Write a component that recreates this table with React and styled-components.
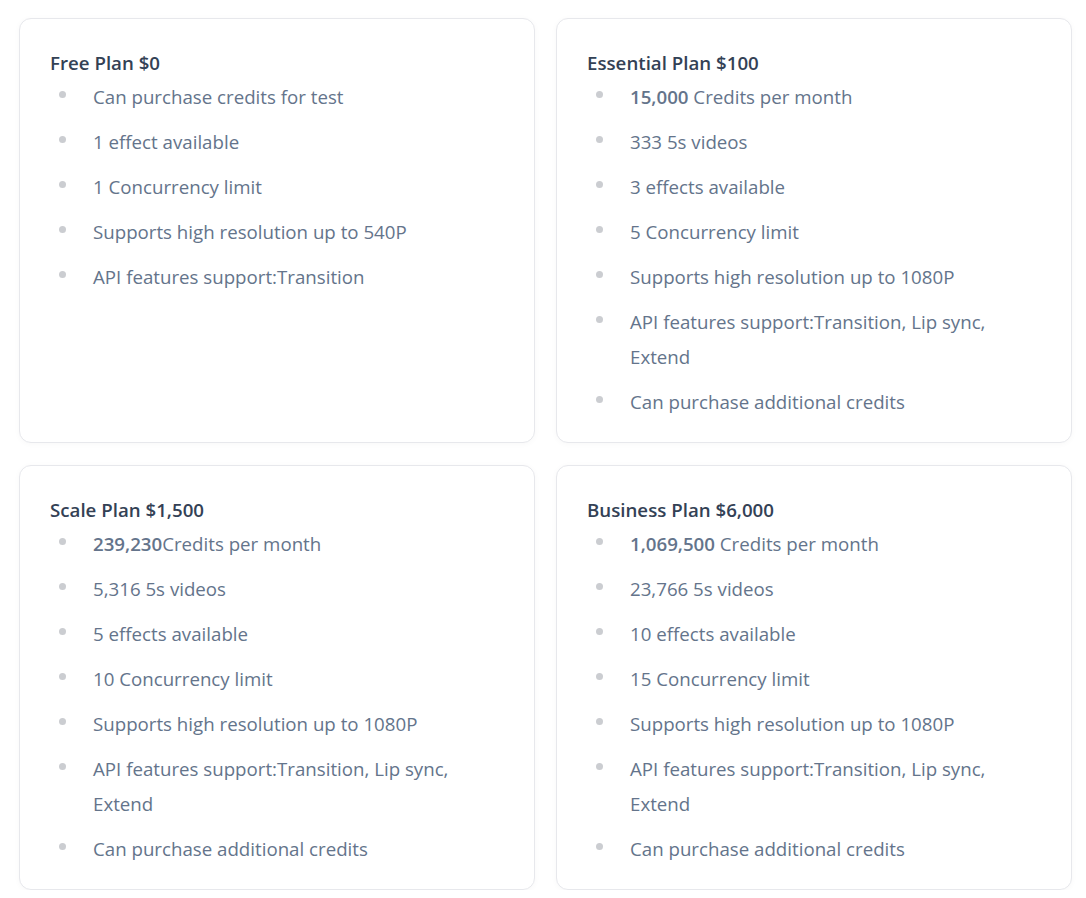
import React from "react";
import styled, { createGlobalStyle } from "styled-components";

const plans = [
	{
		title: "Free Plan $0",
		items: [
			{ text: "Can purchase credits for test" },
			{ text: "1 effect available" },
			{ text: "1 Concurrency limit" },
			{ text: "Supports high resolution up to 540P" },
			{ text: "API features support:Transition" },
		],
	},
	{
		title: "Essential Plan $100",
		items: [
			{ strong: "15,000", text: " Credits per month" },
			{ text: "333 5s videos" },
			{ text: "3 effects available" },
			{ text: "5 Concurrency limit" },
			{ text: "Supports high resolution up to 1080P" },
			{ text: "API features support:Transition, Lip sync, Extend" },
			{ text: "Can purchase additional credits" },
		],
	},
	{
		title: "Scale Plan $1,500",
		items: [
			{ strong: "239,230", text: "Credits per month" },
			{ text: "5,316 5s videos" },
			{ text: "5 effects available" },
			{ text: "10 Concurrency limit" },
			{ text: "Supports high resolution up to 1080P" },
			{ text: "API features support:Transition, Lip sync, Extend" },
			{ text: "Can purchase additional credits" },
		],
	},
	{
		title: "Business Plan $6,000",
		items: [
			{ strong: "1,069,500", text: " Credits per month" },
			{ text: "23,766 5s videos" },
			{ text: "10 effects available" },
			{ text: "15 Concurrency limit" },
			{ text: "Supports high resolution up to 1080P" },
			{ text: "API features support:Transition, Lip sync, Extend" },
			{ text: "Can purchase additional credits" },
		],
	},
];

const App = () => {
	return (
		<>
			<GlobalStyle />
			<Grid>
				{plans.map((plan) => (
					<Card key={plan.title}>
						<Title>{plan.title}</Title>
						<List>
							{plan.items.map((item, i) => (
								<Item key={i}>
									<Dot />
									<ItemText>
										{item.strong && <b>{item.strong}</b>}
										{item.text}
									</ItemText>
								</Item>
							))}
						</List>
					</Card>
				))}
			</Grid>
		</>
	);
};

const GlobalStyle = createGlobalStyle`
	body {
		margin: 0;
		background: #ffffff;
		font-family: "Open Sans", "Noto Sans", sans-serif;
	}
`;

const Grid = styled.div`
	display: grid;
	grid-template-columns: 516px 516px;
	column-gap: 21px;
	row-gap: 22px;
	padding: 18px 14px 0 19px;
`;

const Card = styled.div`
	border: 1px solid #e7e8ec;
	border-radius: 12px;
	background: #fff;
	box-shadow: 0 1px 6px rgba(0, 0, 0, 0.03);
	padding: 30px 30px 22px 30px;
	height: 425px;
	box-sizing: border-box;
`;

const Title = styled.h3`
	margin: 0;
	font-size: 18.7px;
	line-height: 28px;
	font-weight: 600;
	color: #334155;
`;

const List = styled.ul`
	list-style: none;
	margin: 2px 0 0 0;
	padding: 0;
	display: flex;
	flex-direction: column;
	gap: 10px;
`;

const Item = styled.li`
	display: flex;
	align-items: flex-start;
	font-size: 18.7px;
	line-height: 35px;
	color: #64748b;
`;

const Dot = styled.span`
	flex: none;
	width: 7px;
	height: 7px;
	border-radius: 50%;
	background: #cbcdd1;
	margin: 12px 0 0 9px;
`;

const ItemText = styled.span`
	margin-left: 27px;
	b {
		font-weight: 600;
	}
`;

export default App;
